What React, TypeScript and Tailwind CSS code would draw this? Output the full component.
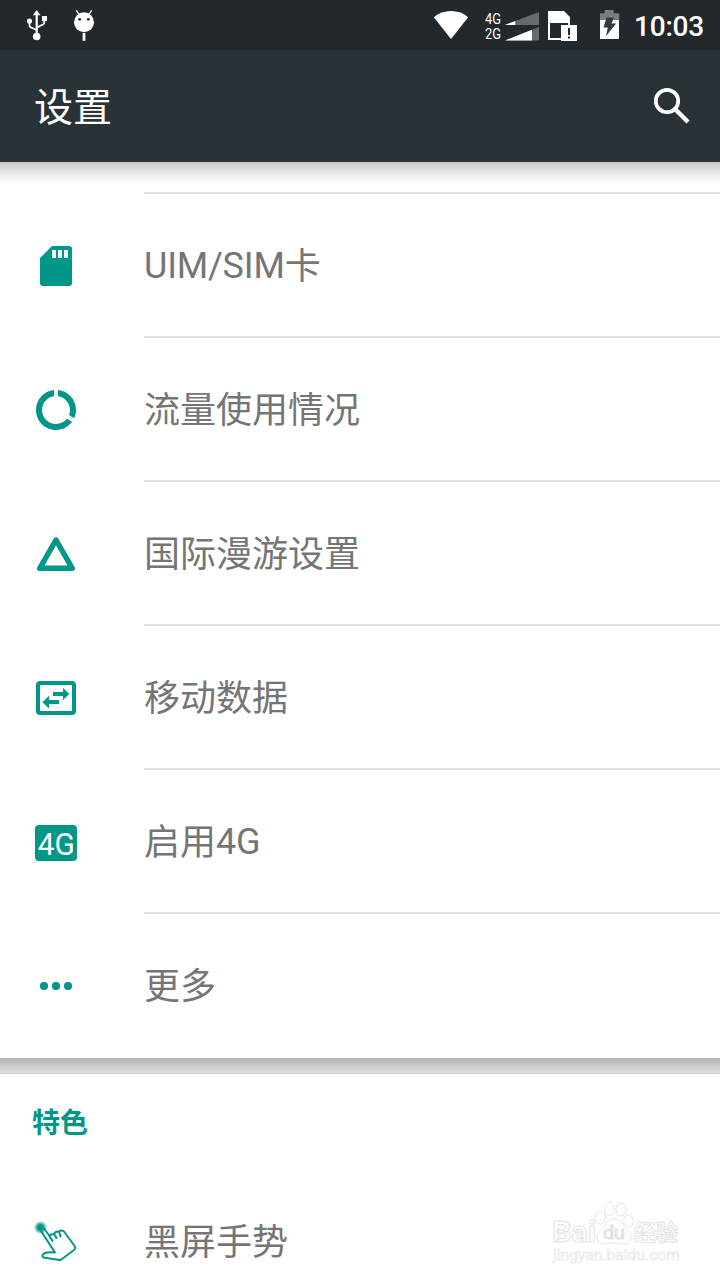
import type { ReactNode } from "react";

const TEAL = "#009688";

function StatusBar() {
  return (
    <div className="flex h-[50px] shrink-0 items-center justify-between bg-[#23282c] text-white">
      <svg width="120" height="50" viewBox="0 0 120 50" fill="none" stroke="#fff">
        <path d="M36.7 36V14" strokeWidth="2.2" />
        <path d="M36.7 10l3.8 5.2h-7.6z" fill="#fff" stroke="none" />
        <path d="M36.7 30l-6.2-2.8q-1-.6-1-2V21M36.7 27.600l6.600-3.400q1-.6 1-2V18" strokeWidth="1.8" />
        <circle cx="29.5" cy="21" r="2.6" fill="#fff" stroke="none" />
        <path d="M42 16h5v5h-5z" fill="#fff" stroke="none" />
        <circle cx="36.7" cy="36.5" r="3.8" fill="#fff" stroke="none" />
        <circle cx="84" cy="22.3" r="10" fill="#fff" stroke="none" />
        <path d="M79.5 15l-3.2-4.6M88.500 15l3.200-4.600" strokeWidth="1.4" />
        <circle cx="79.7" cy="19.300" r="1.400" fill="#23282c" stroke="none" />
        <circle cx="88.300" cy="19.300" r="1.400" fill="#23282c" stroke="none" />
        <path d="M84 33v7.800" strokeWidth="2.800" />
      </svg>
      <div className="flex h-full items-center">
        <svg width="50" height="50" viewBox="430 0 50 50">
          <path d="M451 39L433.800 17.200Q441 11 451 11t17.200 6.200z" fill="#fff" />
        </svg>
        <div className="ml-[5px] flex w-[17px] origin-left scale-x-[.89] flex-col pt-[3px] text-[14.500px] leading-[15px]">
          <span>4G</span>
          <span>2G</span>
        </div>
        <svg width="126" height="50" viewBox="502 0 126 50">
          <path d="M505 25l34-13v13zM505 40.500l34-13.500v13.500z" fill="#666a6c" />
          <path d="M505 25l10.300-4v4zM505 40.500l27-10.800v10.800z" fill="#fff" />
          <path d="M548 11h16l6 6v8h-2v-2h-18v15h11v2h-13z" fill="#fff" />
          <path d="M561 25h16v16h-16z" fill="#fff" />
          <path d="M568 28h2v7h-2zM568 36.500h2v2h-2z" fill="#23282c" />
          <path d="M600 20v-6.700h4.600V10h9v3.300h5.600V20z" fill="#7b7e80" />
          <path d="M600 20h19v19h-19z" fill="#fff" />
          <path d="M606.500 17.500h7.500l-2.500 6h4.700l-10.200 12.500 1.800-8.500h-4.300z" fill="#33383b" />
        </svg>
        <span className="ml-[6px] mr-[16px] w-[70px] whitespace-nowrap pt-[3px] text-[28px] font-medium leading-[32px] tracking-[-0.2px]">10:03</span>
      </div>
    </div>
  );
}

function SimIcon() {
  return (
    <svg width="48" height="48" viewBox="32 242 48 48">
      <path d="M52 246h17q3 0 3 3v34q0 3-3 3H43q-3 0-3-3v-25z" fill={TEAL} />
      <path d="M52 250h4v8h-4zM58 250h4v8h-4zM64 250h4v8h-4z" fill="#fff" />
    </svg>
  );
}

function DataUsageIcon() {
  return (
    <svg width="48" height="48" viewBox="0 0 24 24" fill={TEAL}>
      <path d="M13 2.050v3.030c3.390.490 6 3.390 6 6.920 0 .900-.180 1.750-.480 2.540l2.600 1.530c.560-1.240.880-2.620.880-4.070 0-5.180-3.950-9.450-9-9.950zM12 19c-3.870 0-7-3.130-7-7 0-3.530 2.610-6.430 6-6.920V2.050c-5.060.500-9 4.760-9 9.950 0 5.520 4.470 10 9.990 10 3.310 0 6.240-1.610 8.060-4.090l-2.600-1.530C16.170 17.980 14.210 19 12 19z" />
    </svg>
  );
}

function RoamingIcon() {
  return (
    <svg width="48" height="48" viewBox="32 530 48 48">
      <path d="M56 540L39.700 568.300h32.600z" fill="none" stroke={TEAL} strokeWidth="5.400" strokeLinejoin="round" />
    </svg>
  );
}

function MobileDataIcon() {
  return (
    <svg width="48" height="48" viewBox="32 674 48 48">
      <rect x="38" y="683" width="36" height="30" rx="2" fill="none" stroke={TEAL} strokeWidth="4" />
      <path d="M53 692h10v-4.300l6.200 6.200-6.200 6.200V696H53zM59 700H49v-4.300l-6.500 6.500 6.500 6.200V704h10z" fill={TEAL} />
    </svg>
  );
}

function FourGIcon() {
  return (
    <span className="mt-[2px] flex h-9 w-[42px] items-center justify-center rounded-[4px] bg-[#009688] pt-[2px] text-[31px] leading-none text-white">
      <span className="scale-x-[.96]">4G</span>
    </span>
  );
}

function MoreIcon() {
  return (
    <svg width="48" height="48" viewBox="0 0 48 48" fill={TEAL}>
      <circle cx="12" cy="24" r="4.100" />
      <circle cx="24" cy="24" r="4.100" />
      <circle cx="36" cy="24" r="4.100" />
    </svg>
  );
}

function GestureIcon() {
  return (
    <svg width="48" height="48" viewBox="32 1218 48 48">
      <defs>
        <radialGradient id="touch">
          <stop offset=".4" stopColor={TEAL} />
          <stop offset="1" stopColor={TEAL} stopOpacity="0" />
        </radialGradient>
      </defs>
      <circle cx="40.500" cy="1227.500" r="6.800" fill="url(#touch)" />
      <path
        d="M41 1231L55 1252.500Q48 1251.500 44 1253.500Q41 1255.500 43.500 1257.500L59.500 1260Q61 1260 62 1259L74 1250Q75.500 1249 75 1246.500L64 1231.500Q61.500 1229.500 59 1231.500L60.500 1236.500M59 1231.500Q55.500 1231 54 1234L56.500 1238M54 1234.500Q50.500 1233.500 49.500 1236L52.500 1241M49.500 1236L44 1228.500"
        fill="none"
        stroke={TEAL}
        strokeWidth="2"
        strokeLinejoin="round"
        strokeLinecap="round"
      />
    </svg>
  );
}

function Label({ text }: { text: string }) {
  return (
    <span className="whitespace-nowrap">
      {text.split(/([\u4e00-\u9fff]+)/).filter(Boolean).map((run, i) =>
        /[\u4e00-\u9fff]/.test(run) ? (
          <span key={i} className="align-[-1px] leading-none">{run}</span>
        ) : (
          <span key={i} className="tracking-[-0.2px]">{run}</span>
        )
      )}
    </span>
  );
}

function Row({ icon, label, last = false }: { icon: ReactNode; label: string; last?: boolean }) {
  return (
    <div className="flex h-36 shrink-0">
      <div className="flex w-28 items-center justify-center">{icon}</div>
      <div className={`ml-8 flex flex-1 items-center text-[36px] leading-[44px] text-[#757575] ${last ? "" : "border-b-2 border-[#e0e0e0] pt-[2px]"}`}>
        <Label text={label} />
      </div>
    </div>
  );
}

function Watermark() {
  return (
    <svg className="absolute bottom-[8px] right-[34px]" width="140" height="76" viewBox="546 1196 140 76" fill="#fff" stroke="#e4e4e4" strokeWidth="1">
      <ellipse cx="600.500" cy="1217.500" rx="5" ry="6.500" />
      <ellipse cx="609.500" cy="1209" rx="4.800" ry="6.800" />
      <ellipse cx="621" cy="1209.500" rx="5" ry="6.500" />
      <ellipse cx="628.500" cy="1221" rx="4.800" ry="6.300" />
      <path d="M614 1219c7 0 8 6 12 10s7 7 4 12-8 2-16 2-13 3-16-2 0-8 4-12 5-10 12-10z" />
      <text x="552" y="1242" fontSize="29" fontWeight="700" textLength="44" lengthAdjust="spacingAndGlyphs">Bai</text>
      <text x="603" y="1239" fontSize="18" fontWeight="400" stroke="#dedede" textLength="22" lengthAdjust="spacingAndGlyphs">du</text>
      <text x="634" y="1240" fontSize="22" fontWeight="700" textLength="44" lengthAdjust="spacingAndGlyphs">经验</text>
      <text x="553" y="1260" fontSize="14" fontWeight="400" stroke="#ececec" strokeWidth=".8" textLength="127" lengthAdjust="spacingAndGlyphs">jingyan.baidu.com</text>
    </svg>
  );
}

export default function App() {
  return (
    <div className="relative flex h-[1280px] w-[720px] flex-col overflow-hidden bg-white font-['Roboto','Noto_Sans_CJK_SC',sans-serif]">
      <StatusBar />
      <header className="flex h-28 shrink-0 items-center justify-between bg-[#283237] pl-[34px] pr-6 text-white">
        <h1 className="pt-[4px] text-[39px] font-normal leading-[48px]">设置</h1>
        <svg width="48" height="48" viewBox="648 82 48 48" fill="none" stroke="#fff">
          <circle cx="667" cy="101" r="11.200" strokeWidth="3.800" />
          <path d="M675.500 109.500l12.500 12.500" strokeWidth="4.400" />
        </svg>
      </header>
      <div className="h-[30px] shrink-0 bg-linear-to-b from-[#c9c9c9] via-[#e6e6e6] via-35% to-white to-70%" />
      <div className="ml-36 h-[2px] shrink-0 bg-[#e0e0e0]" />
      <Row icon={<SimIcon />} label="UIM/SIM卡" />
      <Row icon={<DataUsageIcon />} label="流量使用情况" />
      <Row icon={<RoamingIcon />} label="国际漫游设置" />
      <Row icon={<MobileDataIcon />} label="移动数据" />
      <Row icon={<FourGIcon />} label="启用4G" />
      <Row icon={<MoreIcon />} label="更多" last />
      <div className="h-4 shrink-0 border-b border-[#d0d0d0] bg-linear-to-b from-[#b3b3b2] to-[#dededd]" />
      <h2 className="flex h-24 shrink-0 items-center pl-8 pt-[3px] text-[28px] font-bold leading-[40px] text-[#009688]">特色</h2>
      <Row icon={<GestureIcon />} label="黑屏手势" last />
      <Watermark />
    </div>
  );
}
